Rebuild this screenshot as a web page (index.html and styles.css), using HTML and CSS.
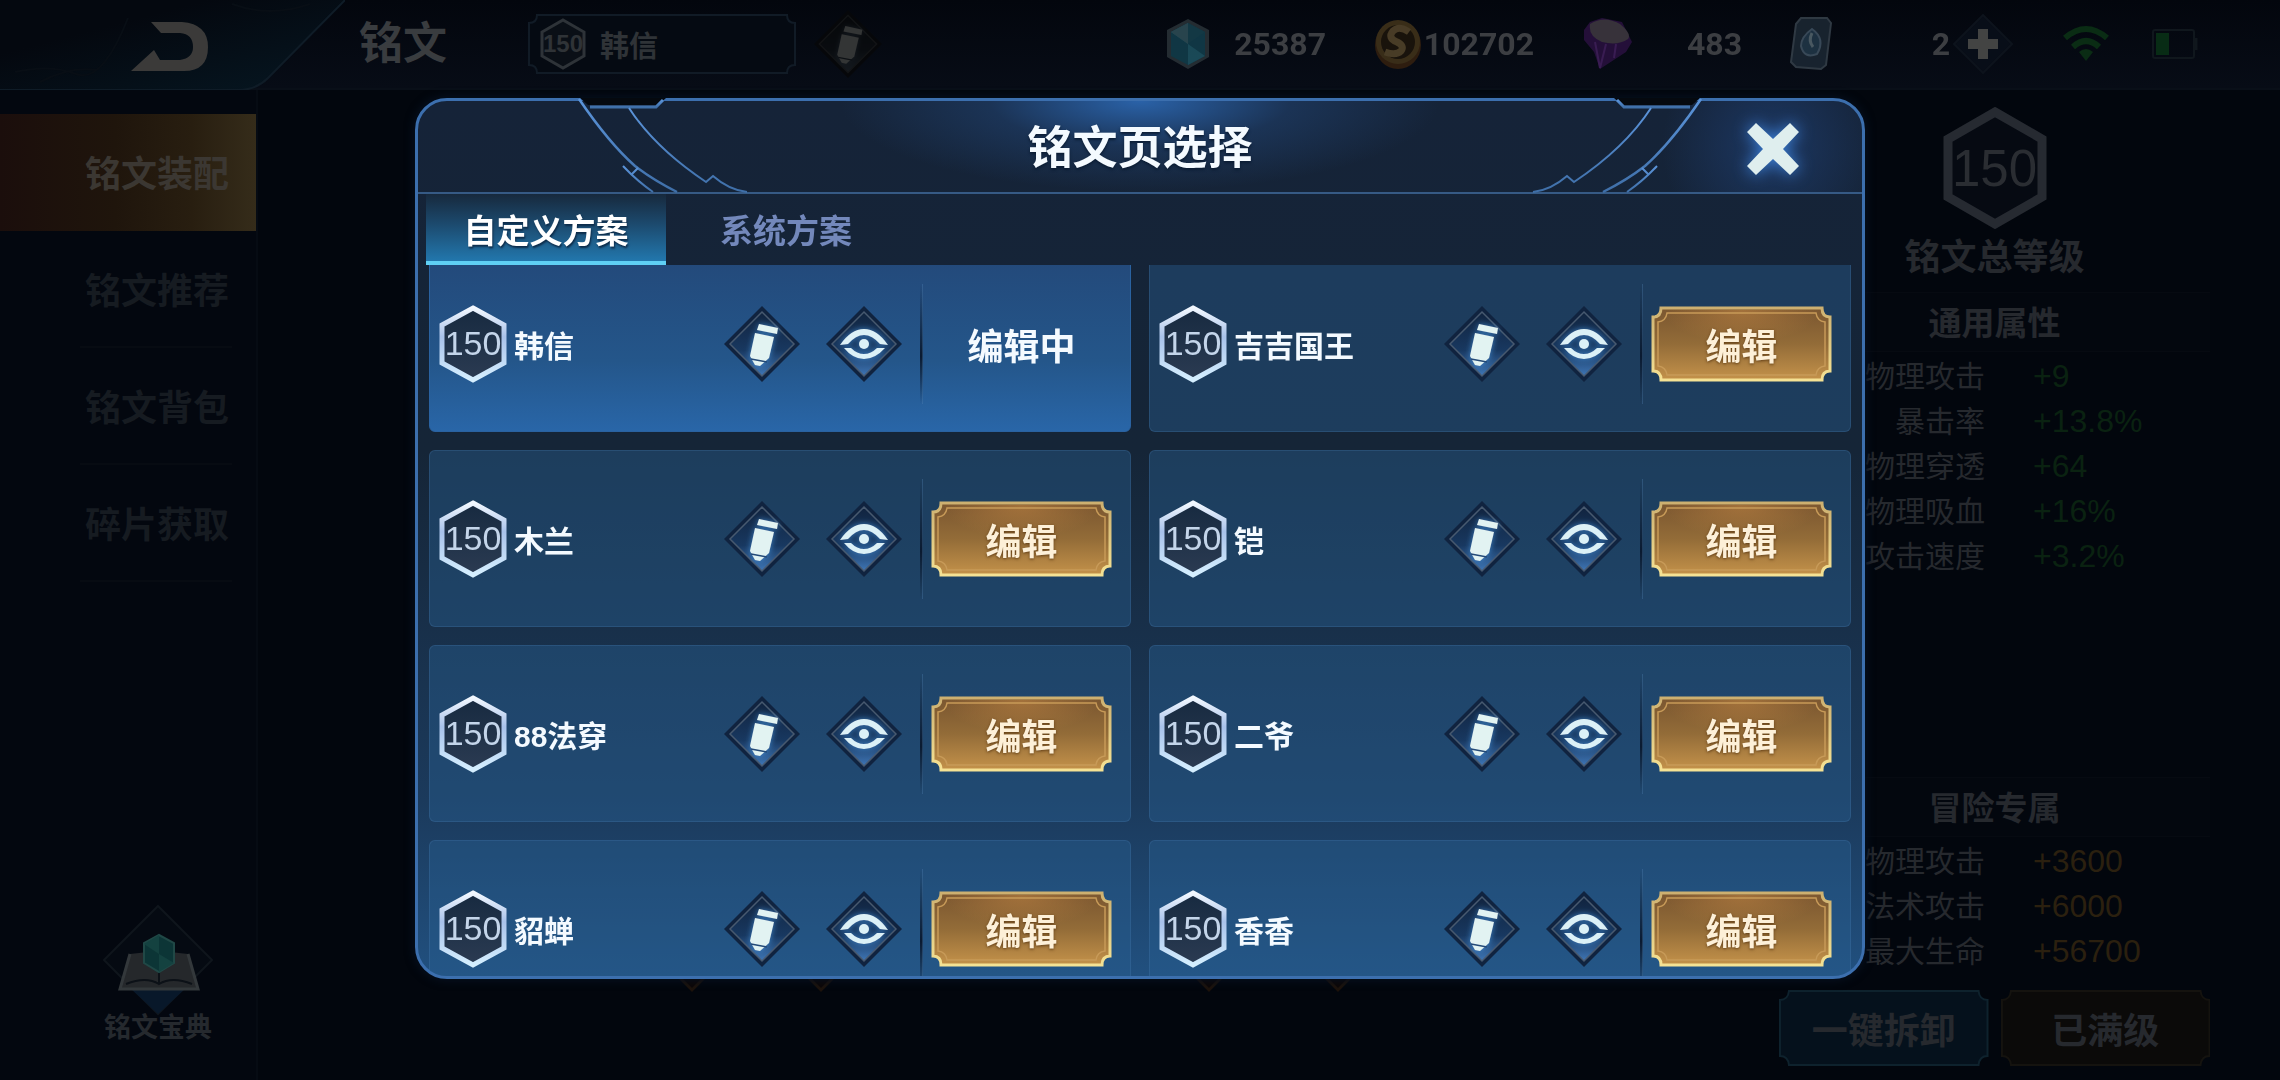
FILE: index.html
```
<!DOCTYPE html>
<html lang="zh-CN">
<head>
  <meta charset="UTF-8">
  <meta name="viewport" content="width=device-width, initial-scale=1.0">
  <title>铭文</title>
  <link rel="stylesheet" href="styles.css">
</head>
<body>

  <!-- shared icons -->
  <svg class="defs" aria-hidden="true">
    <defs>
      <linearGradient id="hexStroke" x1="0" y1="0" x2="0" y2="1">
        <stop offset="0" stop-color="#f2f8ff"/>
        <stop offset="0.4" stop-color="#a9c2ea"/>
        <stop offset="1" stop-color="#d5efff"/>
      </linearGradient>
      <linearGradient id="hexFill" x1="0" y1="0" x2="0" y2="1">
        <stop offset="0" stop-color="#172a40"/>
        <stop offset="1" stop-color="#2b3b52"/>
      </linearGradient>
      <linearGradient id="diamondFill" x1="0" y1="0" x2="0" y2="1">
        <stop offset="0" stop-color="#11243f"/>
        <stop offset="0.6" stop-color="#183860"/>
        <stop offset="1" stop-color="#3f76b6"/>
      </linearGradient>
      <linearGradient id="frameLine" x1="0" y1="0" x2="0" y2="1">
        <stop offset="0" stop-color="#5b94da"/>
        <stop offset="1" stop-color="#3f6fa8"/>
      </linearGradient>
      <linearGradient id="goldFill" x1="0" y1="0" x2="0" y2="1">
        <stop offset="0" stop-color="#7a5630"/>
        <stop offset="0.5" stop-color="#936c38"/>
        <stop offset="1" stop-color="#c4924a"/>
      </linearGradient>
      <linearGradient id="goldLine" x1="0" y1="0" x2="0" y2="1">
        <stop offset="0" stop-color="#cdb070"/>
        <stop offset="1" stop-color="#f5e294"/>
      </linearGradient>
      <radialGradient id="goldGlow" cx="0.5" cy="0" r="0.5">
        <stop offset="0" stop-color="#c98a45" stop-opacity="0.5"/>
        <stop offset="1" stop-color="#c98a45" stop-opacity="0"/>
      </radialGradient>
      <filter id="glow" x="-50%" y="-50%" width="200%" height="200%">
        <feDropShadow dx="0" dy="0" stdDeviation="3" flood-color="#4aa0f0" flood-opacity="0.7"/>
      </filter>
    </defs>

    <symbol id="hexagon" viewBox="0 0 68 78">
      <path d="M34 3 65 20V58L34 75 3 58V20Z" fill="url(#hexFill)" stroke="url(#hexStroke)" stroke-width="5"/>
    </symbol>
    <symbol id="diamond-edit" viewBox="0 0 76 76">
      <path d="M38 0 76 38 38 76 0 38Z" fill="#10233f"/>
      <path d="M38 6 70 38 38 70 6 38Z" fill="url(#diamondFill)" stroke="#47596f" stroke-width="1.5"/>
      <g fill="#e2f3f2" filter="url(#glow)">
        <path d="M35 18 54 22 53 28 33 24Z"/>
        <path d="M31 27 50 31 45 52 36 60 31 59 26 50Z"/>
      </g>
      <path d="M27 53 43 56" stroke="#244a78" stroke-width="1.5"/>
    </symbol>
    <symbol id="diamond-eye" viewBox="0 0 76 76">
      <path d="M38 0 76 38 38 76 0 38Z" fill="#10233f"/>
      <path d="M38 6 70 38 38 70 6 38Z" fill="url(#diamondFill)" stroke="#47596f" stroke-width="1.5"/>
      <g fill="#dcf1f7" filter="url(#glow)">
        <path d="M14 39Q25 23 38 23T62 39L54 38Q46 29 38 29T22 38Z"/>
        <path d="M18 42H25Q31 48 38 48T51 42H59Q49 53 38 53T18 42Z"/>
        <circle cx="38" cy="38" r="5"/>
      </g>
    </symbol>
    <symbol id="gold-plate" viewBox="0 0 181 76">
      <path d="M10 2H171Q171 11 179 11V65Q171 65 171 74H10Q10 65 2 65V11Q10 11 10 2Z" fill="url(#goldFill)" stroke="url(#goldLine)" stroke-width="3"/>
      <rect x="12" y="4" width="157" height="66" fill="url(#goldGlow)"/>
      <path d="M16 7H165Q166 15 174 16V60Q166 61 165 69H16Q15 61 7 60V16Q15 15 16 7Z" fill="none" stroke="#c79a58" stroke-width="1.5"/>
    </symbol>
    <symbol id="frame-corner" viewBox="0 0 340 98">
      <path d="M165 0H251L243 7H173Z" fill="#05090f"/>
      <g fill="none" stroke="url(#frameLine)" stroke-width="2.5">
        <path d="M164 1Q194 45 220 68Q238 82 262 94"/>
        <path d="M175 9H241L248 2" stroke-width="3"/>
        <path d="M208 68Q222 83 238 94M217 76 223 70" stroke-width="2"/>
        <path d="M214 10Q240 50 291 84L298 78Q314 92 332 94" stroke-width="2"/>
      </g>
    </symbol>
  </svg>

  <header class="topbar">
    <button class="back" aria-label="返回">
      <svg viewBox="0 0 345 92" width="345" height="92">
        <defs>
          <linearGradient id="backFill" x1="0" y1="0" x2="1" y2="1">
            <stop offset="0.3" stop-color="#04080f"/>
            <stop offset="1" stop-color="#061722"/>
          </linearGradient>
        </defs>
        <path d="M0 0H345L268 78Q256 90 238 90H0Z" fill="url(#backFill)"/>
        <path d="M345 0 268 78Q256 90 238 90H0" fill="none" stroke="#0f1c27" stroke-width="2"/>
        <path d="M15 72Q50 64 76 74T128 18M40 82Q70 66 96 70M232 4Q270 18 310 4" fill="none" stroke="#080e15" stroke-width="2"/>
        <path d="M151 22H182Q208 24 208 47 208 71 184 71H131L154 50 160 60H180Q193 58 193 47 193 34 180 33H161Z" fill="#3b3a39"/>
      </svg>
    </button>
    <h1 class="page-title">铭文</h1>
    <button class="page-picker">
      <svg class="picker-frame" viewBox="0 0 268 60" preserveAspectRatio="none">
        <path d="M9 1H259Q259 9 267 9V51Q259 51 259 59H9Q9 51 1 51V9Q9 9 9 1Z" fill="#050a12" stroke="#111b26" stroke-width="2"/>
      </svg>
      <span class="badge badge-small">
        <svg viewBox="0 0 46 52"><path d="M23 2 44 14V38L23 50 2 38V14Z" fill="#0a0f16" stroke="#2e3338" stroke-width="3"/></svg>
        <span>150</span>
      </span>
      <span>韩信</span>
    </button>
    <button class="icon-btn dim" aria-label="改名"><svg viewBox="0 0 76 76"><use href="#diamond-edit"/></svg></button>

    <div class="resources">
      <div class="resource">
        <svg width="44" height="52" viewBox="0 0 44 52">
          <path d="M22 1 43 12V39L22 51 1 39V12Z" fill="#2a3338"/>
          <path d="M22 5 39 14V38L22 47 5 38V14Z" fill="#123f4d"/>
          <path d="M22 5V26L5 14ZM39 38 22 26V47Z" fill="#1e5463"/>
          <path d="M22 5 39 14 22 26Z" fill="#16414e"/>
          <path d="M22 5V26L5 14Z" fill="#2f4f58"/>
        </svg>
        <span>25387</span>
      </div>
      <div class="resource">
        <svg width="48" height="52" viewBox="0 0 48 52">
          <ellipse cx="24" cy="27" rx="23" ry="24" fill="#35210f"/>
          <circle cx="24" cy="24" r="22" fill="#43341a"/>
          <circle cx="24" cy="24" r="17" fill="#1d150b"/>
          <path d="M35 14Q25 7 19 13 13 20 23 24 31 28 27 33 22 38 11 34" fill="none" stroke="#54452a" stroke-width="7"/>
        </svg>
        <span>102702</span>
      </div>
      <div class="resource">
        <svg width="50" height="52" viewBox="0 0 50 52">
          <path d="M2 12 8 4 20 0 40 4 50 24 44 34 18 51 12 34 2 22Z" fill="#2a1140"/>
          <path d="M8 6Q22-3 38 6 50 16 46 21 36 28 20 24 6 18 8 6Z" fill="#403a42"/>
          <path d="M13 24 18 50 24 26M34 26 32 40" fill="none" stroke="#43205e" stroke-width="2"/>
        </svg>
        <span>483</span>
      </div>
      <div class="resource">
        <svg width="42" height="54" viewBox="0 0 42 54">
          <path d="M11 1H37L41 6 36 48 31 52 6 50 1 45 6 7Z" fill="#1c2834" stroke="#37424c" stroke-width="2"/>
          <path d="M22 12Q36 22 27 37 14 42 11 29 11 20 22 12Z" fill="#22384a" stroke="#425464" stroke-width="2"/>
          <path d="M22 16Q18 24 23 30" fill="none" stroke="#55666f" stroke-width="3"/>
        </svg>
        <span>2</span>
      </div>
    </div>
    <button class="plus" aria-label="添加">
      <svg width="60" height="60" viewBox="0 0 60 60">
        <path d="M30 1 59 30 30 59 1 30Z" fill="#080e18" stroke="#0d131c" stroke-width="2"/>
        <path d="M25 15H35V25H45V35H35V45H25V35H15V25H25Z" fill="#434443"/>
      </svg>
    </button>
    <svg class="wifi" width="48" height="38" viewBox="0 0 48 38">
      <g fill="none" stroke="#0a2c14" stroke-width="6">
        <path d="M3 13Q24-5 45 13M11 22Q24 10 37 22"/>
      </g>
      <path d="M17 27Q24 21 31 27L24 36Z" fill="#0a2c14"/>
    </svg>
    <svg class="battery" width="46" height="30" viewBox="0 0 46 30">
      <rect x="1" y="1" width="41" height="28" rx="2" fill="none" stroke="#10171d" stroke-width="2"/>
      <path d="M44 9V21" stroke="#10171d" stroke-width="3"/>
      <rect x="4" y="4" width="13" height="22" fill="#082c15"/>
    </svg>
  </header>

  <main class="screen">
    <nav class="sidebar">
      <a class="side-link active" href="#">铭文装配</a>
      <a class="side-link" href="#">铭文推荐</a>
      <a class="side-link" href="#">铭文背包</a>
      <a class="side-link" href="#">碎片获取</a>
      <button class="codex">
        <svg width="112" height="112" viewBox="0 0 112 112">
          <path d="M56 2 110 56 56 110 2 56Z" fill="#050a12" stroke="#0f151c" stroke-width="2"/>
          <path d="M28 84H84L56 110Z" fill="#08182a"/>
          <path d="M28 50 46 48 57 54 68 48 86 50 96 85H18Z" fill="#25282b"/>
          <path d="M28 50 18 85H96L86 50" fill="none" stroke="#33383b" stroke-width="3"/>
          <path d="M24 80Q44 72 57 80 70 72 90 80M57 58V80" fill="none" stroke="#0c1117" stroke-width="2"/>
          <path d="M57 31 72 39V59L57 68 42 59V39Z" fill="#0c3536" stroke="#204846" stroke-width="2"/>
          <path d="M57 31V50L42 40ZM72 59 57 50V68Z" fill="#144240"/>
        </svg>
        <span>铭文宝典</span>
      </button>
    </nav>

    <div class="stage">
      <svg viewBox="0 0 700 26" width="700" height="26">
        <g fill="#0d0706" stroke="#1d130c" stroke-width="3">
          <path d="M4 0 20 16 36 0M133 0 149 16 165 0"/>
          <path d="M521 0 537 16 553 0M650 0 666 16 682 0"/>
        </g>
      </svg>
    </div>

    <aside class="stats">
      <div class="total">
        <span class="badge badge-large">
          <svg viewBox="0 0 104 122"><path d="M52 5 99 32V90L52 117 5 90V32Z" fill="#060a12" stroke="#262a31" stroke-width="9"/></svg>
          <span>150</span>
        </span>
        <h2>铭文总等级</h2>
      </div>
      <section class="attrs">
        <h3>通用属性</h3>
        <dl>
          <dt>物理攻击</dt><dd>+9</dd>
          <dt>暴击率</dt><dd>+13.8%</dd>
          <dt>物理穿透</dt><dd>+64</dd>
          <dt>物理吸血</dt><dd>+16%</dd>
          <dt>攻击速度</dt><dd>+3.2%</dd>
        </dl>
      </section>
      <section class="attrs adventure">
        <h3>冒险专属</h3>
        <dl>
          <dt>物理攻击</dt><dd>+3600</dd>
          <dt>法术攻击</dt><dd>+6000</dd>
          <dt>最大生命</dt><dd>+56700</dd>
        </dl>
      </section>
      <div class="actions">
        <button class="plate-btn blue">
          <svg viewBox="0 0 210 76" preserveAspectRatio="none"><path d="M10 1H200Q201 10 209 10V66Q201 66 200 75H10Q9 66 1 66V10Q9 10 10 1Z" fill="#05111c" stroke="#0e222d" stroke-width="2"/></svg>
          <span>一键拆卸</span>
        </button>
        <button class="plate-btn brown">
          <svg viewBox="0 0 210 76" preserveAspectRatio="none"><path d="M10 1H200Q201 10 209 10V66Q201 66 200 75H10Q9 66 1 66V10Q9 10 10 1Z" fill="#0b0a09" stroke="#15130f" stroke-width="2"/></svg>
          <span>已满级</span>
        </button>
      </div>
    </aside>
  </main>

  <div class="overlay">
    <section class="dialog" role="dialog" aria-labelledby="dialog-title">
      <header class="dialog-head">
        <svg class="corner left" width="340" height="98"><use href="#frame-corner"/></svg>
        <svg class="corner right" width="340" height="98"><use href="#frame-corner"/></svg>
        <h2 id="dialog-title">铭文页选择</h2>
        <button class="close" aria-label="关闭">
          <svg width="54" height="54" viewBox="0 0 54 54">
            <path d="M10 1 27 17 44 1 53 10 37 27 53 44 44 53 27 37 10 53 1 44 17 27 1 10Z" fill="#dfeeee"/>
          </svg>
        </button>
      </header>

      <div class="tabs" role="tablist">
        <button class="tab active" role="tab" aria-selected="true">自定义方案</button>
        <button class="tab" role="tab" aria-selected="false">系统方案</button>
      </div>

      <div class="list" id="page-list"></div>
    </section>
  </div>

  <script>
    const pages = [
      { name: "韩信", level: 150, editing: true },
      { name: "吉吉国王", level: 150 },
      { name: "木兰", level: 150 },
      { name: "铠", level: 150 },
      { name: "88法穿", level: 150 },
      { name: "二爷", level: 150 },
      { name: "貂蝉", level: 150 },
      { name: "香香", level: 150 }
    ];

    const list = document.getElementById("page-list");

    pages.forEach(page => {
      const card = document.createElement("article");
      card.className = page.editing ? "card current" : "card";
      const action = page.editing
        ? `<span class="editing">编辑中</span>`
        : `<button class="edit">
             <svg viewBox="0 0 181 76"><use href="#gold-plate"/></svg>
             <span>编辑</span>
           </button>`;
      card.innerHTML = `
        <span class="badge">
          <svg viewBox="0 0 68 78"><use href="#hexagon"/></svg>
          <span>${page.level}</span>
        </span>
        <span class="name">${page.name}</span>
        <button class="icon-btn" aria-label="改名"><svg viewBox="0 0 76 76"><use href="#diamond-edit"/></svg></button>
        <button class="icon-btn" aria-label="查看"><svg viewBox="0 0 76 76"><use href="#diamond-eye"/></svg></button>
        <i class="divider"></i>
        ${action}
      `;
      list.appendChild(card);
    });

    list.scrollTop = 10;
  </script>

</body>
</html>
```
FILE: styles.css
```
* {
  box-sizing: border-box;
}

body {
  margin: 0;
  height: 100vh;
  display: flex;
  flex-direction: column;
  overflow: hidden;
  background: #02060d;
  color: #26292e;
  font-family: "Liberation Sans", "Noto Sans CJK SC", sans-serif;
}

h1, h2, h3, dl, dd {
  margin: 0;
}

button {
  padding: 0;
  border: none;
  background: none;
  color: inherit;
  font: inherit;
  cursor: pointer;
}

svg {
  display: block;
}

.defs {
  position: absolute;
  width: 0;
  height: 0;
}

/* top bar */
.topbar {
  display: flex;
  align-items: center;
  height: 90px;
  padding-right: 82px;
  background: linear-gradient(#03060d, #070c16);
  border-bottom: 2px solid #090f18;
}

.back {
  align-self: flex-start;
}

.page-title {
  margin-left: 14px;
  font-size: 44px;
  line-height: 60px;
  font-weight: 700;
  color: #393c3f;
}

.page-picker {
  position: relative;
  display: flex;
  align-items: center;
  gap: 14px;
  width: 268px;
  height: 60px;
  margin-left: 81px;
  padding-left: 12px;
  font-size: 29px;
  font-weight: 700;
  color: #2f3337;
}

.page-picker > span {
  position: relative;
}

.picker-frame {
  position: absolute;
  inset: 0;
  width: 100%;
  height: 100%;
}

.topbar .icon-btn {
  width: 68px;
  height: 68px;
  margin-left: 18px;
}

.icon-btn.dim {
  filter: grayscale(0.6) brightness(0.22);
}

.resources {
  display: flex;
  gap: 48px;
  margin-left: auto;
  opacity: 0.85;
}

.resource {
  display: flex;
  align-items: center;
  justify-content: space-between;
  width: 160px;
  font-family: Roboto, sans-serif;
  font-size: 32px;
  font-weight: 700;
  color: #46484b;
}

.plus {
  margin-left: 3px;
}

.wifi {
  margin-left: 49px;
}

.battery {
  margin-left: 42px;
}

/* page behind the dialog */
.screen {
  flex: 1;
  display: flex;
  min-height: 0;
}

.sidebar {
  display: flex;
  flex-direction: column;
  width: 258px;
  padding: 24px 0 40px;
  border-right: 2px solid #060b13;
  background: #03070f;
}

.side-link {
  height: 117px;
  padding-right: 27px;
  font-size: 36px;
  font-weight: 700;
  line-height: 121px;
  text-align: right;
  text-decoration: none;
  color: #161b21;
  background: linear-gradient(#070b12, #070b12) no-repeat 80px 100% / 152px 2px;
}

.side-link.active {
  color: #3b3732;
  background: linear-gradient(90deg, #1b0e0c, #1f150c 45%, #281e10 75%, #352c1a);
}

.codex {
  display: flex;
  flex-direction: column;
  align-items: center;
  margin: auto 0 0 60px;
  font-size: 27px;
  font-weight: 700;
  line-height: 24px;
  color: #25292e;
}

.stage {
  flex: 1;
  display: flex;
  align-items: flex-end;
  justify-content: center;
  padding: 0 0 80px 6px;
}

.stats {
  display: flex;
  flex-direction: column;
  width: 501px;
  padding: 17px 70px 14px 0;
}

.total {
  display: flex;
  flex-direction: column;
  align-items: center;
}

.total h2 {
  font-size: 36px;
  font-weight: 700;
  line-height: 58px;
}

.attrs h3 {
  margin: 5px 0 2px 60px;
  padding: 4px 60px 0 0;
  border: solid #060a11;
  border-width: 1px 0;
  background: #03070e;
  font-size: 33px;
  font-weight: 700;
  line-height: 54px;
  text-align: center;
}

.attrs dl {
  display: grid;
  grid-template-columns: 206px 1fr;
  column-gap: 48px;
  font-size: 30px;
  line-height: 45px;
}

.attrs dt {
  text-align: right;
}

.attrs dd {
  font-size: 32px;
  color: #0a2211;
}

.adventure {
  margin-top: auto;
}

.adventure dd {
  color: #2b200f;
}

.actions {
  display: flex;
  gap: 12px;
  margin-top: 16px;
}

.plate-btn {
  position: relative;
  flex: 1;
  height: 76px;
  font-size: 36px;
  font-weight: 700;
}

.plate-btn svg,
.edit svg,
.badge svg {
  position: absolute;
  inset: 0;
  width: 100%;
  height: 100%;
}

.plate-btn span,
.edit span,
.badge span {
  position: relative;
}

/* level hexagon */
.badge {
  position: relative;
  display: flex;
  align-items: center;
  justify-content: center;
  width: 68px;
  height: 78px;
  font-size: 34px;
  color: #c4d5ea;
}

.badge-small {
  width: 46px;
  height: 52px;
  font-size: 24px;
  font-weight: 700;
  color: #2f3337;
}

.badge-large {
  width: 104px;
  height: 122px;
  font-size: 51px;
  color: #2a2d32;
}

/* dialog */
.overlay {
  position: fixed;
  inset: 0;
  display: flex;
  padding: 98px 415px 101px;
}

.dialog {
  flex: 1;
  display: flex;
  flex-direction: column;
  min-width: 0;
  border: 3px solid #3c6fae;
  border-radius: 32px;
  background: linear-gradient(#152338, #152537 40%, #1b3a5c 80%, #21507f);
  box-shadow: 0 0 8px 2px #06101f;
  color: #f4faff;
}

.dialog-head {
  position: relative;
  display: flex;
  align-items: center;
  justify-content: center;
  height: 93px;
  padding-top: 4px;
  border-bottom: 2px solid #365a85;
  border-radius: 29px 29px 0 0;
  background:
    radial-gradient(ellipse 300px 90px at 50% 0, #2a62a8, rgba(36, 76, 130, 0.4) 50%, transparent),
    radial-gradient(circle 110px at calc(100% - 90px) 50%, #1c3762, transparent);
}

.corner {
  position: absolute;
  top: -3px;
  left: -3px;
}

.corner.right {
  left: auto;
  right: -3px;
  transform: scaleX(-1);
}

.dialog-head h2 {
  position: relative;
  font-size: 45px;
  font-weight: 700;
  line-height: 64px;
  text-shadow: 0 2px 3px #0b1c33;
}

.close {
  position: absolute;
  right: 62px;
  filter: drop-shadow(0 0 8px #3d83dd);
}

.tabs {
  display: flex;
  padding: 0 8px;
}

.tab {
  width: 240px;
  height: 71px;
  padding-top: 2px;
  border-bottom: 4px solid transparent;
  font-size: 33px;
  font-weight: 700;
  color: #7388bb;
}

.tab.active {
  color: #fff;
  background: linear-gradient(#17293d, #1c4a6e 45%, #2277ad);
  border-bottom-color: #5fd0f5;
  text-shadow: 1px 2px 2px #0d2c4a;
}

.list {
  flex: 1;
  display: grid;
  grid-template-columns: 1fr 1fr;
  grid-auto-rows: 177px;
  gap: 18px;
  min-height: 0;
  padding: 0 11px 8px;
  border-radius: 0 0 28px 28px;
  overflow-y: auto;
  scrollbar-width: none;
}

.card {
  display: flex;
  align-items: center;
  padding: 0 18px 0 9px;
  border: 1px solid rgba(70, 120, 170, 0.3);
  border-radius: 6px;
  background: rgba(40, 95, 145, 0.42);
}

.card.current {
  border-color: #2a62a0;
  background: linear-gradient(#23497a, #24568a 60%, #2966a8);
}

.name {
  flex: 1;
  margin-left: 7px;
  font-size: 30px;
  font-weight: 700;
}

.icon-btn {
  width: 76px;
  height: 76px;
}

.icon-btn + .icon-btn {
  margin-left: 26px;
}

.divider {
  width: 3px;
  height: 120px;
  margin: 0 8px 0 18px;
  background: linear-gradient(transparent, #0a1a30 60%, transparent);
  border-right: 1px solid rgba(90, 140, 190, 0.3);
}

.edit {
  position: relative;
  width: 181px;
  height: 76px;
  font-size: 36px;
  font-weight: 700;
  color: #fdf0d8;
  text-shadow: 0 1px 3px #5f3c14;
}

.editing {
  width: 181px;
  font-size: 36px;
  font-weight: 700;
  text-align: center;
}
```
